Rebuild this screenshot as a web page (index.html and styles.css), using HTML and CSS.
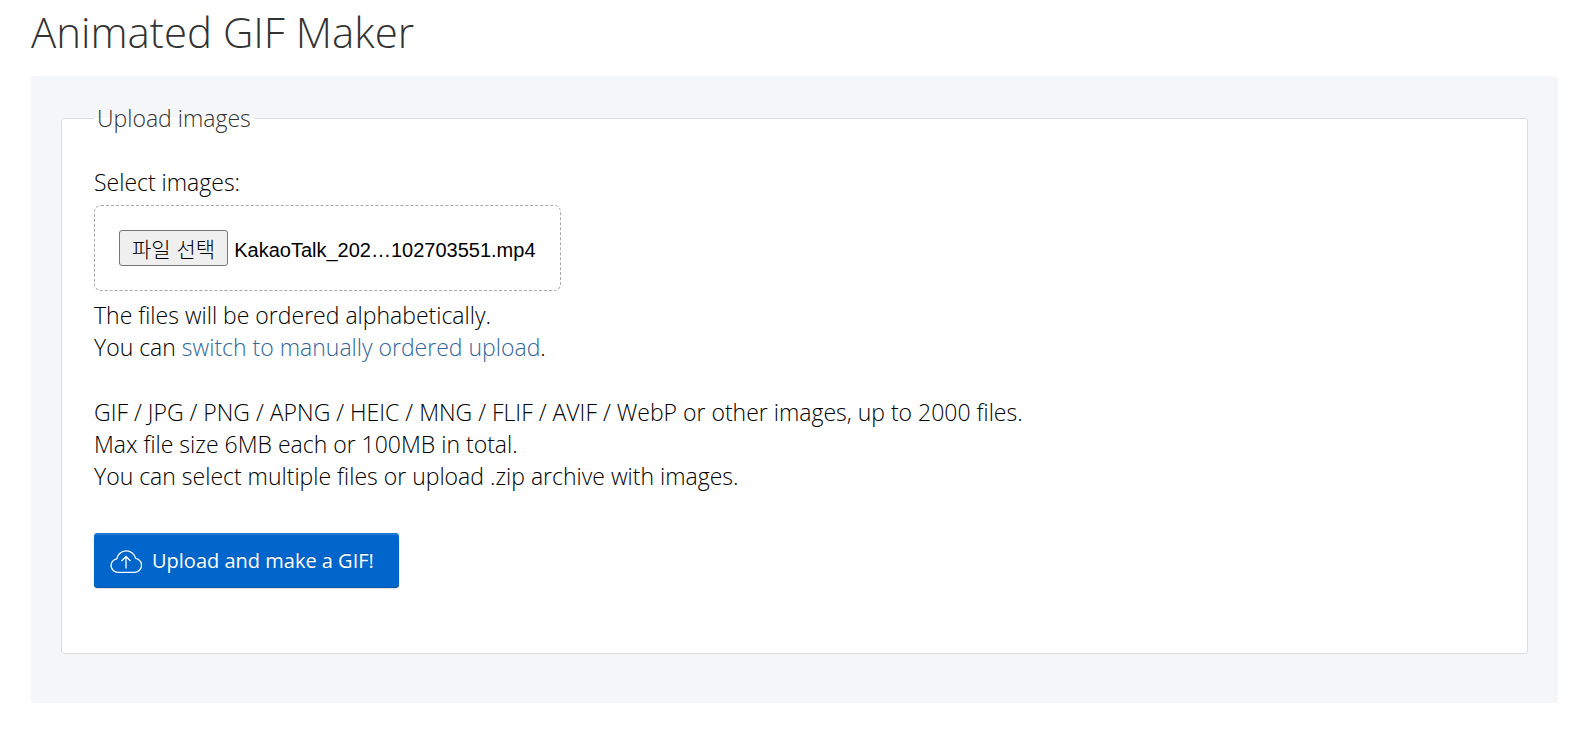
FILE: index.html
```html
<!DOCTYPE html>
<html lang="en">
<head>
<meta charset="utf-8">
<title>Animated GIF Maker</title>
<link rel="stylesheet" href="styles.css">
</head>
<body>
<main class="page">
  <h1 class="title">Animated GIF Maker</h1>
  <form class="panel">
    <fieldset class="upload">
      <legend class="legend">Upload images</legend>
      <label class="label" for="images">Select images:</label>
      <div class="picker">
        <input class="file-input" type="file" id="images" multiple tabindex="-1">
        <button class="choose" type="button" lang="ko">파일 선택</button>
        <span class="filename">KakaoTalk_202…102703551.mp4</span>
      </div>
      <p class="text">The files will be ordered alphabetically.<br>
        You can <a class="link" href="#manual">switch to manually ordered upload</a>.</p>
      <p class="text formats">GIF / JPG / PNG / APNG / HEIC / MNG / FLIF / AVIF / WebP or other images, up to 2000 files.<br>
        Max file size 6MB each or 100MB in total.<br>
        You can select multiple files or upload .zip archive with images.</p>
      <button class="submit" type="submit">
        <svg class="cloud" viewBox="0 0 32 24" aria-hidden="true">
          <path d="M8 23.3h16.3a7 7 0 0 0 1.4-13.9A9.7 9.7 0 0 0 6.7 9.8 6.8 6.8 0 0 0 8 23.3z"/>
          <path d="M16 19.5V7.5M11.5 12 16 7.5l4.500 4.500"/>
        </svg>
        Upload and make a GIF!
      </button>
    </fieldset>
  </form>
</main>
</body>
</html>
```
FILE: styles.css
```css
body {
  margin: 0;
  background: #fff;
  color: #000;
  font: 300 23px/32px "Open Sans", "Noto Sans CJK KR", sans-serif;
}

.page {
  padding: 0 27px 28px 31px;
}

.title {
  margin: 0;
  padding: 4px 0 16px;
  color: #333;
  font-size: 42px;
  font-weight: 300;
  line-height: 56px;
}

.panel {
  padding: 26px 30px 49px;
  border-radius: 4px;
  background: #f4f6f8;
}

.upload {
  margin: 0;
  padding: 32px 32px 65px;
  border: 1px solid #ddd;
  border-radius: 3px;
  background: #fff;
}

.legend {
  padding: 0 3px;
  color: #333;
}

.label {
  display: block;
}

.picker {
  display: flex;
  align-items: center;
  gap: 6px;
  box-sizing: border-box;
  width: fit-content;
  margin: 7px 0 8px;
  padding: 24px;
  border: 1px dashed #aaa;
  border-radius: 7px;
}

.file-input {
  position: absolute;
  width: 1px;
  height: 1px;
  opacity: 0;
}

.choose {
  height: 36px;
  padding: 0 12px;
  border: 1px solid #767676;
  border-radius: 3px;
  background: #efefef;
  color: #000;
  font: 300 21px/30px "Noto Sans CJK KR", sans-serif;
}

.filename {
  padding-top: 3px;
  font: 400 20px/32px "Liberation Sans", Arial, sans-serif;
}

.text {
  margin: 0;
}

.formats {
  margin: 33px 0 41px;
}

.link {
  color: #369;
  text-decoration: none;
}

.submit {
  display: flex;
  align-items: center;
  gap: 10px;
  height: 55px;
  padding: 1px 25px 0 16px;
  border: 0;
  border-radius: 4px;
  background: #06c;
  box-shadow: inset 0 2px #1f78d3, inset 0 -1px #0052a3, 0 1px 2px #0002;
  color: #fff;
  font: 400 20px/32px "Open Sans", sans-serif;
  text-shadow: 0 -1px #0003;
}

.cloud {
  width: 32px;
  height: 24px;
  fill: none;
  stroke: #fff;
  stroke-width: 1.3;
  stroke-linejoin: round;
}
```
